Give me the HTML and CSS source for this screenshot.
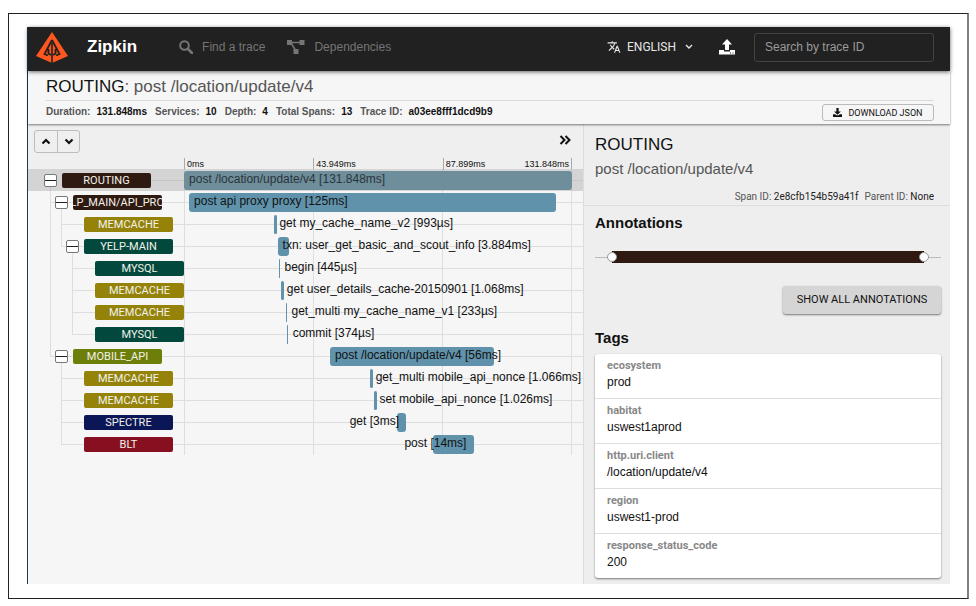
FILE: index.html
```html
<!DOCTYPE html>
<html lang="en">
<head>
<meta charset="utf-8">
<title>Zipkin</title>
<link rel="stylesheet" href="styles.css">
</head>
<body>
<div class="frame">
<div class="app">
  <header class="topbar">
    <svg class="logo" viewBox="0 0 32 31" aria-hidden="true">
      <path fill="#fe5720" d="M16 0 32 24 16 31 0 24Z"/>
      <path fill="none" stroke="#212121" stroke-width="1.800" d="M16 8 8.500 22l3.500 1.500M16 8l7.500 14-3.500 1.500M12.500 17v4.500l2.500 1.500M19.500 17v4.500l-2.500 1.500"/>
      <path fill="#212121" d="M15.200 11h1.600v20h-1.600z"/>
    </svg>
    <h1 class="brand">Zipkin</h1>
    <nav class="nav">
      <a class="nav-link" href="#find">
        <svg width="14" height="14" viewBox="0 0 14 14" aria-hidden="true"><circle cx="5.5" cy="5.5" r="4.3" fill="none" stroke="currentColor" stroke-width="2"/><path d="m9 9 4 4" stroke="currentColor" stroke-width="2.6" stroke-linecap="round"/></svg>
        Find a trace
      </a>
      <a class="nav-link" href="#dependencies">
        <svg width="18" height="14" viewBox="0 0 18 14" aria-hidden="true"><path d="M3 2.5h12M4 3l5 8" stroke="currentColor" stroke-width="1.6" fill="none"/><path fill="currentColor" d="M0 0h5v5H0zM12.500 0h5v5h-5zM6.500 9h5v5h-5z"/></svg>
        Dependencies
      </a>
    </nav>
    <button class="language" type="button">
      <svg width="14" height="14" viewBox="0 0 24 24" aria-hidden="true"><path fill="currentColor" d="M12.870 15.070l-2.540-2.510.03-.03A17.520 17.520 0 0 0 14.070 6H17V4h-7V2H8v2H1v1.990h11.170C11.500 7.920 10.440 9.750 9 11.350 8.070 10.320 7.300 9.190 6.690 8h-2c.73 1.630 1.730 3.170 2.980 4.560l-5.090 5.020L4 19l5-5 3.110 3.110.76-2.040zM18.500 10h-2L12 22h2l1.120-3h4.750L21 22h2l-4.500-12zm-2.620 7l1.620-4.330L19.120 17h-3.240z"/></svg>
      ENGLISH
      <svg class="chevron" width="8" height="6" viewBox="0 0 8 6" aria-hidden="true"><path d="m1 1 3 3 3-3" fill="none" stroke="currentColor" stroke-width="1.400"/></svg>
    </button>
    <button class="upload" type="button" aria-label="Upload JSON">
      <svg width="16" height="16" viewBox="0 0 16 16" aria-hidden="true"><path fill="currentColor" d="M8 0l5 5.500h-3V11H6V5.500H3zM0 11h5v1.500h6V11h5v4.500H0z"/><path fill="#212121" d="M11 13.500h1v1h-1zM13.500 13.500h1v1h-1z"/></svg>
    </button>
    <input class="search" type="text" placeholder="Search by trace ID" aria-label="Search by trace ID">
  </header>

  <section class="summary">
    <h2 class="trace-title">ROUTING<span class="muted">: post /location/update/v4</span></h2>
    <div class="meta">
      <dl class="facts">
        <div><dt>Duration:</dt><dd>131.848ms</dd></div>
        <div><dt>Services:</dt><dd>10</dd></div>
        <div><dt>Depth:</dt><dd>4</dd></div>
        <div><dt>Total Spans:</dt><dd>13</dd></div>
        <div><dt>Trace ID:</dt><dd>a03ee8fff1dcd9b9</dd></div>
      </dl>
      <button class="download" type="button">
        <svg width="9" height="9" viewBox="0 0 16 16" aria-hidden="true"><path fill="currentColor" d="M6 0h4v6h4l-6 6-6-6h4zM0 11h4l2 2h4l2-2h4v5H0z"/></svg>
        DOWNLOAD JSON
      </button>
    </div>
  </section>

  <main class="content">
    <section class="trace">
      <div class="toolbar">
        <div class="button-group">
          <button type="button" aria-label="Collapse all"><svg width="10" height="7" viewBox="0 0 10 7" aria-hidden="true"><path d="m1.500 5.500 3.500-3.500 3.500 3.500" fill="none" stroke="currentColor" stroke-width="2.200"/></svg></button>
          <button type="button" aria-label="Expand all"><svg width="10" height="7" viewBox="0 0 10 7" aria-hidden="true"><path d="m1.500 1.500 3.500 3.500 3.500-3.500" fill="none" stroke="currentColor" stroke-width="2.200"/></svg></button>
        </div>
        <button class="hide-detail" type="button" aria-label="Hide detail"><svg width="12" height="10" viewBox="0 0 12 10" aria-hidden="true"><path d="m1.500 1 4 4-4 4M6.500 1l4 4-4 4" fill="none" stroke="currentColor" stroke-width="2"/></svg></button>
      </div>

      <div class="ticks">
        <span>0ms</span><span>43.949ms</span><span class="last"><span>87.899ms</span><span>131.848ms</span></span>
      </div>

      <div class="rows">
        <div class="row selected">
          <div class="tree"><span class="node open"><button class="toggle" type="button" aria-label="Collapse"></button></span><span class="badge routing"><span>ROUTING</span></span><span class="rest"></span></div>
          <div class="track"><span class="bar" style="left:0%;width:100%"></span><span class="label" style="left:1.3%">post /location/update/v4 [131.848ms]</span></div>
        </div>
        <div class="row">
          <div class="tree"><span class="guide tee"></span><span class="node open"><button class="toggle" type="button" aria-label="Collapse"></button></span><span class="badge routing"><span>YELP_MAIN/API_PROXY</span></span><span class="rest"></span></div>
          <div class="track"><span class="bar" style="left:1.2%;width:94.7%"></span><span class="label" style="left:2.6%">post api proxy proxy [125ms]</span></div>
        </div>
        <div class="row">
          <div class="tree"><span class="guide pass"></span><span class="guide tee"></span><span class="node"></span><span class="badge memcache"><span>MEMCACHE</span></span><span class="rest"></span></div>
          <div class="track"><span class="bar" style="left:23.2%;width:0.75%"></span><span class="label" style="left:24.6%">get my_cache_name_v2 [993µs]</span></div>
        </div>
        <div class="row">
          <div class="tree"><span class="guide pass"></span><span class="guide end"></span><span class="node open"><button class="toggle" type="button" aria-label="Collapse"></button></span><span class="badge mysql"><span>YELP-MAIN</span></span><span class="rest"></span></div>
          <div class="track"><span class="bar" style="left:24.1%;width:2.9%"></span><span class="label" style="left:25.4%">txn: user_get_basic_and_scout_info [3.884ms]</span></div>
        </div>
        <div class="row">
          <div class="tree"><span class="guide pass"></span><span class="guide"></span><span class="guide tee"></span><span class="node"></span><span class="badge mysql"><span>MYSQL</span></span><span class="rest"></span></div>
          <div class="track"><span class="bar" style="left:24.4%;width:0.34%"></span><span class="label" style="left:25.9%">begin [445µs]</span></div>
        </div>
        <div class="row">
          <div class="tree"><span class="guide pass"></span><span class="guide"></span><span class="guide tee"></span><span class="node"></span><span class="badge memcache"><span>MEMCACHE</span></span><span class="rest"></span></div>
          <div class="track"><span class="bar" style="left:25%;width:0.8%"></span><span class="label" style="left:26.5%">get user_details_cache-20150901 [1.068ms]</span></div>
        </div>
        <div class="row">
          <div class="tree"><span class="guide pass"></span><span class="guide"></span><span class="guide tee"></span><span class="node"></span><span class="badge memcache"><span>MEMCACHE</span></span><span class="rest"></span></div>
          <div class="track"><span class="bar" style="left:26.3%;width:0.2%"></span><span class="label" style="left:27.7%">get_multi my_cache_name_v1 [233µs]</span></div>
        </div>
        <div class="row">
          <div class="tree"><span class="guide pass"></span><span class="guide"></span><span class="guide end"></span><span class="node"></span><span class="badge mysql"><span>MYSQL</span></span><span class="rest"></span></div>
          <div class="track"><span class="bar" style="left:26.6%;width:0.28%"></span><span class="label" style="left:28%">commit [374µs]</span></div>
        </div>
        <div class="row">
          <div class="tree"><span class="guide end"></span><span class="node open"><button class="toggle" type="button" aria-label="Collapse"></button></span><span class="badge mobile"><span>MOBILE_API</span></span><span class="rest"></span></div>
          <div class="track"><span class="bar" style="left:37.6%;width:42.4%"></span><span class="label" style="left:38.9%">post /location/update/v4 [56ms]</span></div>
        </div>
        <div class="row">
          <div class="tree"><span class="guide"></span><span class="guide tee"></span><span class="node"></span><span class="badge memcache"><span>MEMCACHE</span></span><span class="rest"></span></div>
          <div class="track"><span class="bar" style="left:47.9%;width:0.8%"></span><span class="label" style="left:49.4%">get_multi mobile_api_nonce [1.066ms]</span></div>
        </div>
        <div class="row">
          <div class="tree"><span class="guide"></span><span class="guide tee"></span><span class="node"></span><span class="badge memcache"><span>MEMCACHE</span></span><span class="rest"></span></div>
          <div class="track"><span class="bar" style="left:49%;width:0.8%"></span><span class="label" style="left:50.4%">set mobile_api_nonce [1.026ms]</span></div>
        </div>
        <div class="row">
          <div class="tree"><span class="guide"></span><span class="guide tee"></span><span class="node"></span><span class="badge spectre"><span>SPECTRE</span></span><span class="rest"></span></div>
          <div class="track"><span class="bar" style="left:55%;width:2.3%"></span><span class="label" style="left:42.7%">get [3ms]</span></div>
        </div>
        <div class="row">
          <div class="tree"><span class="guide"></span><span class="guide end"></span><span class="node"></span><span class="badge blt"><span>BLT</span></span><span class="rest"></span></div>
          <div class="track"><span class="bar" style="left:64.1%;width:10.6%"></span><span class="label" style="left:56.8%">post [14ms]</span></div>
        </div>
      </div>
    </section>

    <aside class="detail">
      <div class="detail-head">
        <h2>ROUTING</h2>
        <p class="span-name">post /location/update/v4</p>
        <p class="ids"><span>Span ID: <b>2e8cfb154b59a41f</b></span><span>Parent ID: <b>None</b></span></p>
      </div>
      <div class="detail-body">
        <h3>Annotations</h3>
        <div class="annotations">
          <button class="dot" type="button" aria-label="Server start"></button>
          <span class="span-line"></span>
          <button class="dot" type="button" aria-label="Server finish"></button>
        </div>
        <div class="actions"><button class="show-all" type="button">SHOW ALL ANNOTATIONS</button></div>
        <h3>Tags</h3>
        <dl class="tags">
          <div><dt>ecosystem</dt><dd>prod</dd></div>
          <div><dt>habitat</dt><dd>uswest1aprod</dd></div>
          <div><dt>http.uri.client</dt><dd>/location/update/v4</dd></div>
          <div><dt>region</dt><dd>uswest1-prod</dd></div>
          <div><dt>response_status_code</dt><dd>200</dd></div>
        </dl>
      </div>
    </aside>
  </main>
</div>
</div>
</body>
</html>
```
FILE: styles.css
```css
* { box-sizing: border-box; }

body {
  margin: 0;
  padding: 13px 7px 7px 8px;
  background: #fff;
  color: #111;
  font: 12px/16px "Liberation Sans", Arial, sans-serif;
}

h1, h2, h3, p, dl, dd { margin: 0; font-weight: normal; }

button {
  margin: 0;
  padding: 0;
  border: 0;
  background: none;
  color: inherit;
  font: inherit;
}

.frame {
  border: 1px solid #222;
  border-right: 2px solid #808080;
  padding: 13px 17px 14px 18px;
}

.app {
  display: flex;
  flex-direction: column;
  min-height: calc(100vh - 49px);
  border-left: 1px solid #1d3b50;
  background: #f6f6f6;
}

.topbar {
  position: relative;
  z-index: 2;
  display: flex;
  align-items: center;
  height: 44px;
  padding: 0 16px 4px 8px;
  background: #212121;
  box-shadow: 0 1px 4px rgba(0, 0, 0, 0.6);
  color: #fff;
}

.logo { width: 32px; height: 31px; }

.brand {
  margin-left: 19px;
  font-size: 17px;
  font-weight: bold;
}

.nav { display: flex; gap: 22px; margin-left: 42px; }

.nav-link {
  display: flex;
  align-items: center;
  gap: 9px;
  color: #757575;
  text-decoration: none;
}

.language {
  display: flex;
  align-items: center;
  gap: 6px;
  margin-left: auto;
  color: #e6e6e6;
  font: 12px/16px Roboto, sans-serif;
}

.chevron { margin-left: 3px; }

.upload { height: 16px; margin: 0 19px 0 26px; }

.search {
  width: 180px;
  height: 29px;
  padding: 0 10px;
  border: 1px solid #424242;
  border-radius: 3px;
  background: transparent;
  color: #fff;
  font: inherit;
}

.search::placeholder { color: #9a9a9a; opacity: 1; }

.summary {
  position: relative;
  z-index: 1;
  padding: 4px 16px 3px 18px;
  background: #f6f6f6;
  box-shadow: 0 1px 2px rgba(0, 0, 0, 0.5);
}

.trace-title {
  padding-bottom: 1px;
  border-bottom: 1px solid #dadada;
  font-size: 17px;
  line-height: 24px;
}

.muted { color: #555; }

.meta {
  display: flex;
  align-items: center;
  justify-content: space-between;
  padding-top: 3px;
}

.facts { display: flex; gap: 8px; font-size: 10px; line-height: 14px; font-weight: bold; padding-bottom: 2px; }
.facts div { display: flex; gap: 6px; }
.facts dt { color: #555; }
.facts dd { font-weight: bold; }

.download {
  display: flex;
  align-items: center;
  justify-content: center;
  gap: 6px;
  width: 112px;
  height: 17px;
  border: 1px solid #bbb;
  border-radius: 3px;
  font: 9px/12px Roboto, sans-serif;
}

.content { display: flex; flex: 1; }

.trace { flex: 1; min-width: 0; }

.toolbar {
  display: flex;
  align-items: flex-start;
  justify-content: space-between;
  height: 34px;
  padding: 6px 12px 0 6px;
  background: #efefef;
}

.button-group {
  display: flex;
  border: 1px solid #bdbdbd;
  border-radius: 3px;
}

.button-group button {
  display: flex;
  align-items: center;
  justify-content: center;
  width: 22px;
  height: 21px;
}

.button-group button + button { border-left: 1px solid #bdbdbd; }

.hide-detail { display: flex; padding: 5px 0; }

.ticks {
  display: grid;
  grid-template-columns: repeat(3, 1fr);
  height: 11px;
  padding: 0 11px 0 156px;
  background: #efefef;
  font-size: 9px;
  line-height: 12px;
}

.ticks > span { padding-left: 2px; border-left: 1px solid #aaa; }

.ticks .last {
  display: flex;
  justify-content: space-between;
  padding-right: 2px;
  border-right: 1px solid #aaa;
}

.row {
  --line: #dedede;
  --wire: linear-gradient(var(--line), var(--line)) 0 11px / 100% 1px no-repeat;
  display: flex;
  height: 22px;
  padding-right: 11px;
  background: linear-gradient(var(--line), var(--line)) 100% 11px / 11px 1px no-repeat;
  overflow: hidden;
}

.tree { display: flex; flex: none; align-items: center; width: 156px; padding-left: 22px; }

.guide { width: 11px; height: 22px; }
.pass { background: linear-gradient(var(--line), var(--line)) 0 0 / 1px 100% no-repeat; }
.tee { background: linear-gradient(var(--line), var(--line)) 0 0 / 1px 100% no-repeat, var(--wire); }
.end { background: linear-gradient(var(--line), var(--line)) 0 0 / 1px 11px no-repeat, var(--wire); }

.node { display: flex; align-items: center; width: 12px; height: 22px; background: var(--wire); }
.open { background: linear-gradient(var(--line), var(--line)) 0 11px / 1px 11px no-repeat, var(--wire); }
.selected .node { background: linear-gradient(var(--line), var(--line)) 0 11px / 1px 11px no-repeat; }

.toggle {
  flex: none;
  width: 13px;
  height: 13px;
  margin-left: -6px;
  border: 1px solid #777;
  border-radius: 2px;
  background: linear-gradient(#222, #222) 0 5px / 100% 1px no-repeat #fff;
}

.badge {
  display: flex;
  flex: none;
  justify-content: center;
  width: 89px;
  height: 15px;
  border-radius: 2px;
  color: #f2f2ea;
  font: 11px/15px Roboto, sans-serif;
  white-space: nowrap;
  overflow: hidden;
}

.routing { background: #2f1a12; }
.memcache { background: #948209; }
.mysql { background: #02483c; }
.mobile { background: #6d7f08; }
.spectre { background: #0b1657; }
.blt { background: #861020; }

.rest { flex: 1; height: 22px; background: var(--wire); }

.track {
  position: relative;
  flex: 1;
  background:
    linear-gradient(var(--line), var(--line)) 0 0 / 1px 100% no-repeat,
    linear-gradient(var(--line), var(--line)) 33.333% 0 / 1px 100% no-repeat,
    linear-gradient(var(--line), var(--line)) 66.667% 0 / 1px 100% no-repeat,
    linear-gradient(var(--line), var(--line)) 100% 0 / 1px 100% no-repeat,
    var(--wire);
}

.bar {
  position: absolute;
  top: 2px;
  height: 19px;
  min-width: 1px;
  border-radius: 3px;
  background: #6093ab;
}

.label { position: absolute; top: 2px; white-space: nowrap; }

.selected { --line: #c6c6c6; background-color: #d4d4d4; }
.selected .bar { background: #6e8e9b; }
.selected .label { color: #2b343a; }

.detail {
  flex: none;
  width: 40%;
  max-width: 367px;
  border-left: 1px solid #ddd;
  background: #eee;
}

.detail-head { padding: 10px 16px 2px 11px; border-bottom: 1px solid #ddd; }
.detail-head h2 { font-size: 17px; line-height: 22px; }
.span-name { color: #555; font-size: 15px; line-height: 26px; }

.ids {
  display: flex;
  justify-content: flex-end;
  gap: 6px;
  padding-top: 9px;
  color: #555;
  font: 10px/12px Roboto, sans-serif;
}

.ids b { color: #222; font-weight: normal; }

.detail-body { padding: 7px 9px 4px 11px; }

h3 { font-size: 15px; font-weight: bold; line-height: 20px; }

.annotations {
  display: flex;
  align-items: center;
  height: 12px;
  margin: 18px 0 23px;
  padding: 0 12px;
  background: linear-gradient(#bbb, #bbb) 0 6px / 100% 1px no-repeat;
}

.span-line { flex: 1; height: 12px; margin: 0 -5px; background: #2f1a12; }

.dot {
  z-index: 1;
  width: 10px;
  height: 10px;
  border: 1px solid #999;
  border-radius: 50%;
  background: #fff;
}

.actions { display: flex; justify-content: flex-end; margin-bottom: 14px; }

.show-all {
  width: 158px;
  height: 28px;
  border-radius: 3px;
  background: #d5d5d5;
  box-shadow: 0 1px 2px rgba(0, 0, 0, 0.5);
  font: 11px/24px Roboto, sans-serif;
}

.tags {
  margin-top: 6px;
  border-radius: 3px;
  background: #fff;
  box-shadow: 0 1px 2px rgba(0, 0, 0, 0.5);
}

.tags div { padding: 4px 12px 8px; }
.tags div + div { border-top: 1px solid #ddd; }
.tags dt { color: #888; font: bold 11px/16px Roboto, sans-serif; }
.tags dd { font-size: 12px; }
```
